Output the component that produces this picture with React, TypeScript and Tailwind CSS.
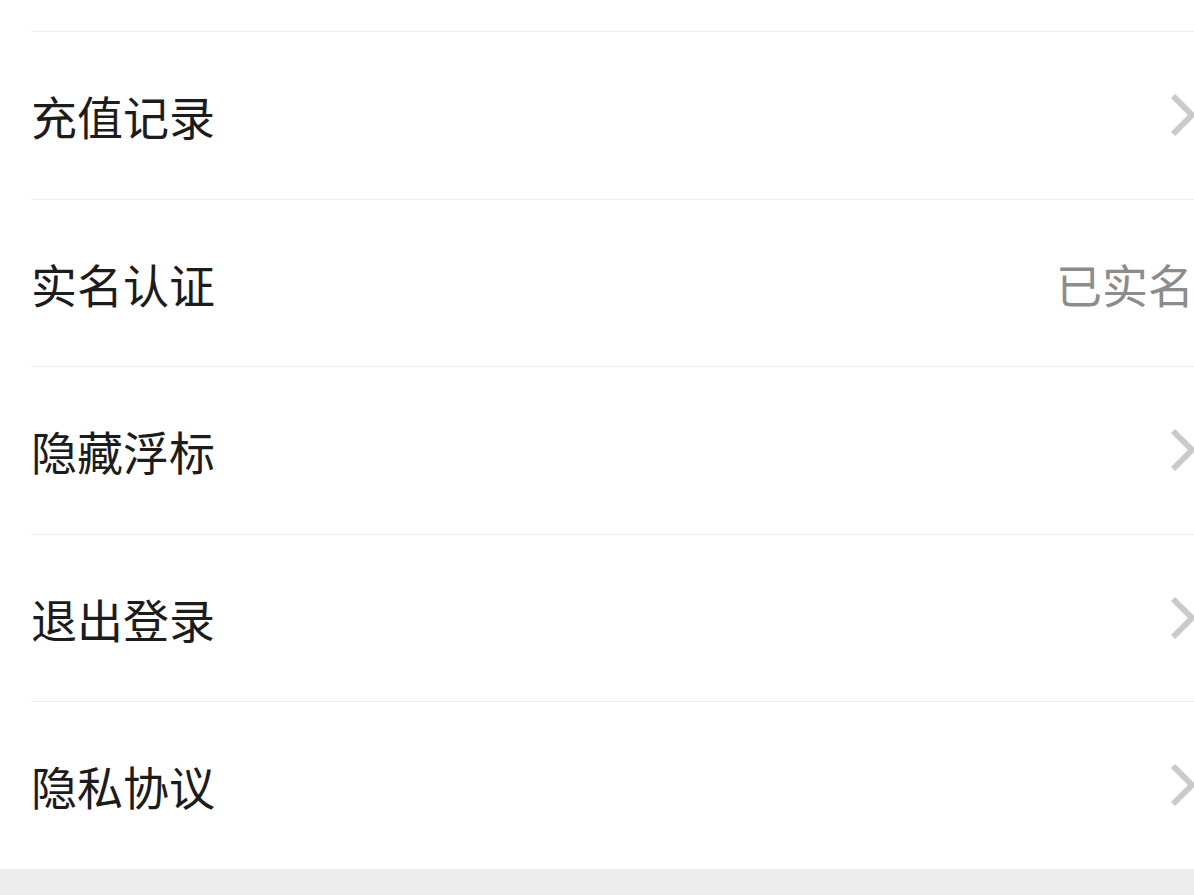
const rows: { label: string; value?: string }[] = [
  { label: '充值记录' },
  { label: '实名认证', value: '已实名' },
  { label: '隐藏浮标' },
  { label: '退出登录' },
  { label: '隐私协议' },
];

function Chevron() {
  return (
    <svg width="26" height="44" viewBox="0 0 26 44" className="shrink-0">
      <polyline
        points="3,3 22,22 3,41"
        fill="none"
        stroke="#cacaca"
        strokeWidth="6"
        strokeLinecap="butt"
        strokeLinejoin="miter"
      />
    </svg>
  );
}

export default function App() {
  return (
    <div
      className="w-[1194px] h-[895px] overflow-hidden bg-white flex flex-col"
      style={{ fontFamily: '"Noto Sans CJK SC", "Noto Sans", sans-serif' }}
    >
      <div className="h-[31px] shrink-0" />
      <div className="pl-[31px]">
        {rows.map((r) => (
          <div
            key={r.label}
            className="h-[167.5px] border-t border-[#f0f0f0] flex items-center justify-between"
          >
            <span className="text-[46px] leading-none text-[#1c1c1c]">{r.label}</span>
            {r.value ? (
              <span className="text-[46px] leading-none text-[#8c8c8c]">{r.value}</span>
            ) : (
              <div className="mr-[-2px] flex items-center">
                <Chevron />
              </div>
            )}
          </div>
        ))}
      </div>
      <div className="flex-1 bg-[#ececec]" />
    </div>
  );
}
